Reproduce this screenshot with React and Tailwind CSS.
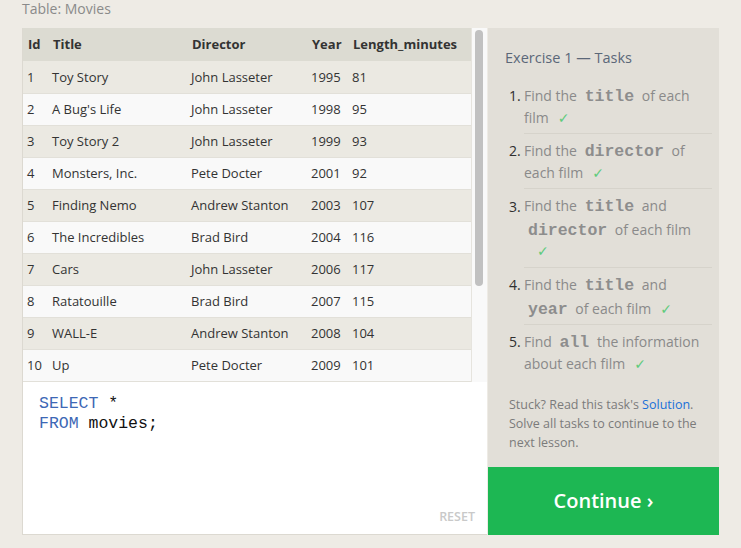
const movies = [
  [1, "Toy Story", "John Lasseter", 1995, 81],
  [2, "A Bug's Life", "John Lasseter", 1998, 95],
  [3, "Toy Story 2", "John Lasseter", 1999, 93],
  [4, "Monsters, Inc.", "Pete Docter", 2001, 92],
  [5, "Finding Nemo", "Andrew Stanton", 2003, 107],
  [6, "The Incredibles", "Brad Bird", 2004, 116],
  [7, "Cars", "John Lasseter", 2006, 117],
  [8, "Ratatouille", "Brad Bird", 2007, 115],
  [9, "WALL-E", "Andrew Stanton", 2008, 104],
  [10, "Up", "Pete Docter", 2009, 101],
]

function Code({ children }) {
  return (
    <span className="mx-[4px] font-['Liberation_Mono',monospace] font-bold text-[16.5px] leading-[20px] text-[#8d8d8d]">
      {children}
    </span>
  )
}

function Check() {
  return <span className="ml-[9px] font-['DejaVu_Sans',sans-serif] text-[14px] text-[#5fcb7c]">✓</span>
}

// body: padding + line height for the task text
function Task({ n, last, body = 'pt-[6px] pb-[4px] leading-[22px]', numPt = 'pt-[6px]', children }) {
  return (
    <li className="flex">
      <span className={`w-[15px] shrink-0 text-[#2f2f2f] ${numPt}`}>{n}.</span>
      <div className={`flex-1 ${body} ${last ? '' : 'border-b border-[#d6d3cb]'}`}>{children}</div>
    </li>
  )
}

export default function App() {
  return (
    <div className="min-h-screen bg-[#eeebe5] font-['Open_Sans',sans-serif]">
      <div className="pl-[22px]">
        <div className="h-[28px] text-[14px] leading-[17px] text-[#8a8a8a]">Table: Movies</div>

        <div className="flex h-[507px]">
          {/* left: table + editor */}
          <div className="w-[465px] flex flex-col border-l border-b border-[#dcd9d1]">
            <div className="flex h-[354px] overflow-hidden">
              <table className="w-[448px] table-fixed border-collapse text-[13px] text-[#333]">
                <colgroup>
                  <col className="w-[25px]" />
                  <col className="w-[139px]" />
                  <col className="w-[120px]" />
                  <col className="w-[41px]" />
                  <col className="w-[123px]" />
                </colgroup>
                <thead>
                  <tr className="h-[33px] bg-[#dcdbd2] text-left font-bold">
                    <th className="pl-[5px] pt-[1px]">Id</th>
                    <th className="pl-[5px] pt-[1px]">Title</th>
                    <th className="pl-[5px] pt-[1px]">Director</th>
                    <th className="pl-[5px] pt-[1px]">Year</th>
                    <th className="pl-[5px] pt-[1px]">Length_minutes</th>
                  </tr>
                </thead>
                <tbody>
                  {movies.map((m, i) => (
                    <tr
                      key={m[0]}
                      className={`h-[32px] border-b border-[#e2e0d9] ${i % 2 === 0 ? 'bg-[#ebe9e2]' : 'bg-[#f9f9f9]'}`}
                    >
                      {m.map((v, j) => (
                        <td key={j} className="pl-[4px] pt-[1px] whitespace-nowrap">{v}</td>
                      ))}
                    </tr>
                  ))}
                </tbody>
              </table>
              <div className="w-[16px] bg-[#f9f9f9] border-l border-[#e6e4de] pt-[2px]">
                <div className="ml-[3px] w-[8px] h-[256px] rounded-full bg-[#c1c1c1]" />
              </div>
            </div>

            <div className="flex-1 bg-white flex flex-col pl-[16px] pr-[12px] pt-[12px] pb-[9px]">
              <pre className="font-['Liberation_Mono',monospace] text-[16.5px] leading-[20px] text-[#111]">
                <span className="text-[#3d67b5]">SELECT</span> *{'\n'}
                <span className="text-[#3d67b5]">FROM</span> movies;
              </pre>
              <div className="mt-auto self-end text-[12.5px] leading-[16px] font-semibold text-[#c9c9c9]">RESET</div>
            </div>
          </div>

          {/* right: tasks */}
          <div className="w-[231px] ml-[1px] bg-[#e2dfd8] flex flex-col">
            <div className="pl-[17px] pr-[7px] pt-[20px]">
              <div className="text-[14.5px] leading-[20px] text-[#5b6778]">Exercise 1 — Tasks</div>
              <ol className="mt-[11px] ml-[4px] text-[14px] leading-[22px] text-[#8a8a8a]">
                <Task n={1}>
                  Find the <Code>title</Code> of each film<Check />
                </Task>
                <Task n={2}>
                  Find the <Code>director</Code> of each film<Check />
                </Task>
                <Task n={3} body="pt-[5px] pb-[7px] leading-[24px]" numPt="pt-[7px]">
                  Find the <Code>title</Code> and <Code>director</Code> of each film
                  <div className="h-[18px] leading-[18px] pl-[4px]">
                    <Check />
                  </div>
                </Task>
                <Task n={4} body="pt-[5px] pb-[3px] leading-[24px]" numPt="pt-[6px]">
                  Find the <Code>title</Code> and <Code>year</Code> of each film<Check />
                </Task>
                <Task n={5} last>
                  Find <Code>all</Code> the information about each film<Check />
                </Task>
              </ol>
              <p className="mt-[16px] ml-[4px] text-[12.5px] leading-[19px] text-[#7b7b7b]">
                Stuck? Read this task's <span className="text-[#1a6fd8]">Solution</span>.
                <br />
                Solve all tasks to continue to the next lesson.
              </p>
            </div>
            <div className="mt-auto h-[68px] bg-[#1db753] flex items-center justify-center text-white text-[20px] font-semibold">
              Continue ›
            </div>
          </div>
        </div>
      </div>
    </div>
  )
}
